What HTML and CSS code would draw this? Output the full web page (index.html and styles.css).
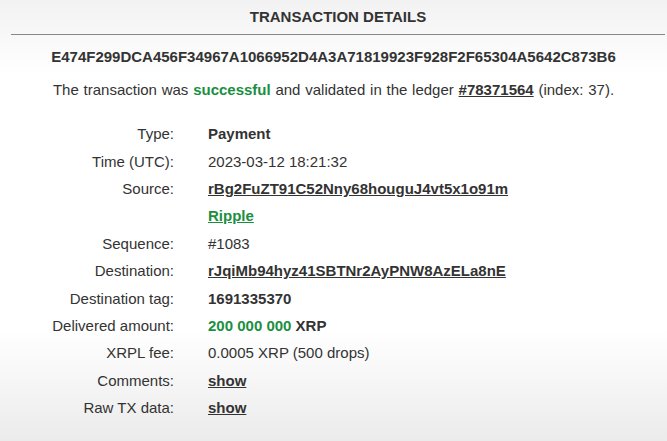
FILE: index.html
```html
<!DOCTYPE html>
<html lang="en">
<head>
  <meta charset="UTF-8">
  <meta name="viewport" content="width=device-width, initial-scale=1.0">
  <title>Transaction Details</title>
  <link rel="stylesheet" href="styles.css">
</head>
<body>

  <!-- Cabecera -->
  <div class="tx-header">Transaction details</div>

  <div class="tx-hash">E474F299DCA456F34967A1066952D4A3A71819923F928F2F65304A5642C873B6</div>

  <p class="tx-status">
    The transaction was <b class="green">successful</b> and validated in the ledger
    <a href="#" class="link">#78371564</a> (index: 37).
  </p>

  <!-- Datos de la transacción -->
  <div class="tx-table">
    <div class="label">Type:</div>
    <div class="value"><b>Payment</b></div>

    <div class="label">Time (UTC):</div>
    <div class="value">2023-03-12 18:21:32</div>

    <div class="label">Source:</div>
    <div class="value"><a href="#" class="link">rBg2FuZT91C52Nny68houguJ4vt5x1o91m</a></div>

    <div class="label"></div>
    <div class="value"><a href="#" class="link green">Ripple</a></div>

    <div class="label">Sequence:</div>
    <div class="value">#1083</div>

    <div class="label">Destination:</div>
    <div class="value"><a href="#" class="link">rJqiMb94hyz41SBTNr2AyPNW8AzELa8nE</a></div>

    <div class="label">Destination tag:</div>
    <div class="value"><b>1691335370</b></div>

    <div class="label">Delivered amount:</div>
    <div class="value"><b class="green">200 000 000</b> <b>XRP</b></div>

    <div class="label">XRPL fee:</div>
    <div class="value">0.0005 XRP (500 drops)</div>

    <div class="label">Comments:</div>
    <div class="value"><a href="#" class="link">show</a></div>

    <div class="label">Raw TX data:</div>
    <div class="value"><a href="#" class="link">show</a></div>
  </div>

</body>
</html>
```

FILE: styles.css
```css
/* Estilos generales */
body {
  font-family: "Liberation Sans", Arial, sans-serif;
  font-size: 15px;
  color: #333;
  margin: 0;
  min-height: 441px;
  background: linear-gradient(#f2f2f2 0, #ffffff 75px, #ffffff 330px, #ebebeb 441px);
}

.tx-header {
  margin: 0 2px 0 11px;
  height: 34px;
  line-height: 33px;
  text-align: center;
  font-weight: bold;
  text-transform: uppercase;
  border-bottom: 1px solid #888;
}

.tx-hash {
  margin-top: 12px;
  line-height: 20px;
  text-align: center;
  font-weight: bold;
}

.tx-status {
  margin: 13px 0 0;
  line-height: 20px;
  text-align: center;
  word-spacing: 0.6px;
}

.green {
  color: #1a8f3f;
}

.link {
  color: #333;
  font-weight: bold;
  text-decoration: underline;
}

.link.green {
  color: #1a8f3f;
}

/* Tabla de detalles */
.tx-table {
  margin-top: 20px;
  display: grid;
  grid-template-columns: 174px 1fr;
  column-gap: 34px;
  grid-auto-rows: 27.4px;
  align-items: center;
}

.label {
  text-align: right;
}
```
